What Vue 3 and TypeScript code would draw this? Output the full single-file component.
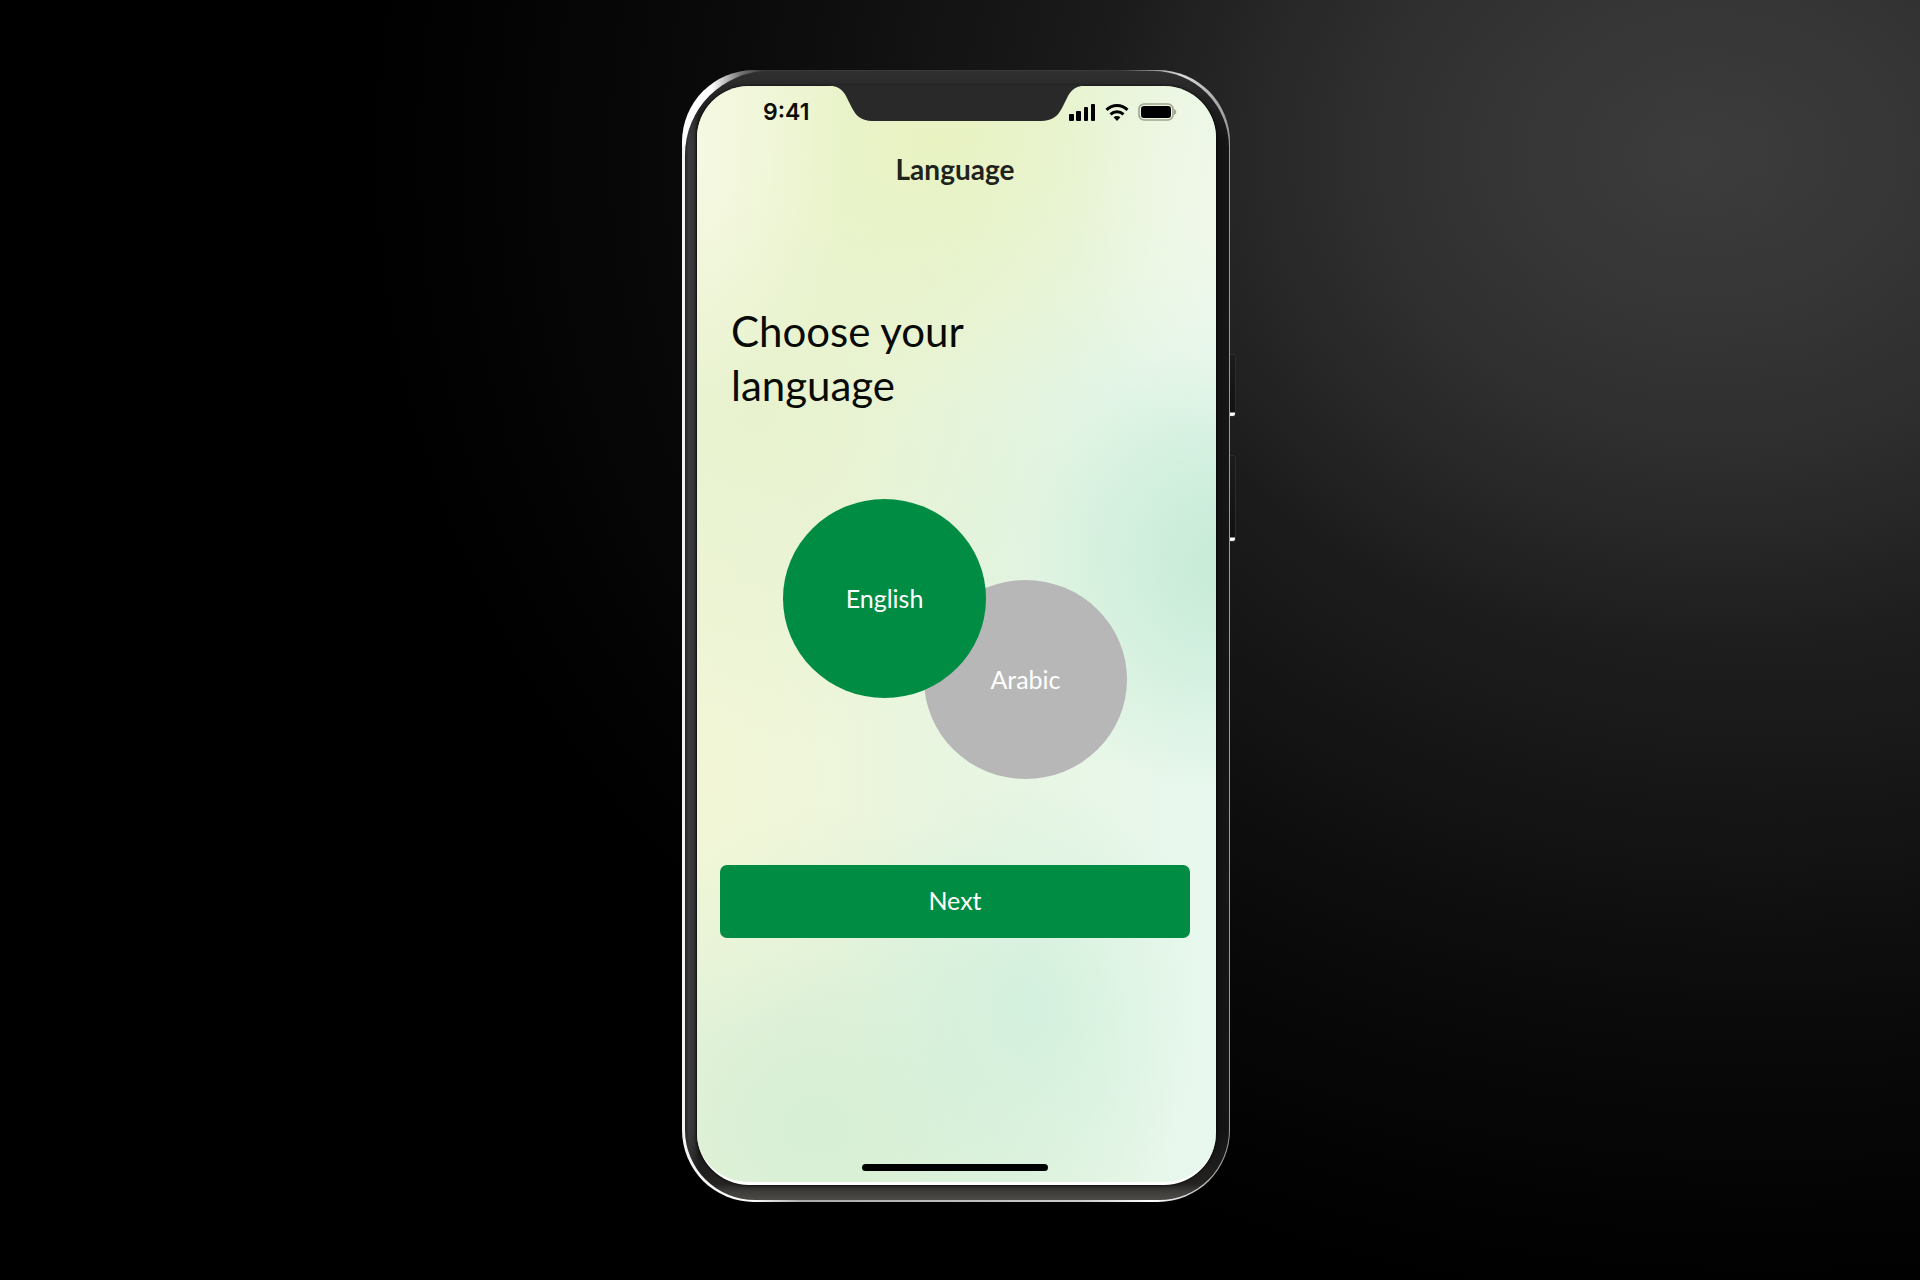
<script setup lang="ts">
import { ref } from 'vue'

interface Language {
  id: string
  label: string
}

const languages: Language[] = [
  { id: 'en', label: 'English' },
  { id: 'ar', label: 'Arabic' },
]
const selected = ref('en')
</script>

<template>
  <main class="stage">
    <div class="phone">
      <div class="side-keys">
        <span class="key key-up"></span>
        <span class="key key-down"></span>
      </div>
      <div class="bezel">
        <div class="screen">
          <svg class="notch" viewBox="0 0 262 36" aria-hidden="true">
            <path d="M0 0C12 1 16 4 20 11L26 23C30 31 36 36 46 36H215C226 36 232 31 236 23L242 11C246 4 250 1 262 0Z" fill="#292929" />
          </svg>
          <div class="status">
            <time class="clock">9:41</time>
            <div class="indicators">
              <svg width="28" height="18" viewBox="0 0 28 18" aria-hidden="true">
                <rect x="1" y="11" width="5" height="7" rx="1" />
                <rect x="8" y="8" width="5" height="10" rx="1" />
                <rect x="16" y="4" width="4" height="14" rx="1" />
                <rect x="23" y="1" width="4" height="17" rx="1" />
              </svg>
              <svg width="24" height="18" viewBox="0 0 24 18" aria-hidden="true">
                <g fill="none" stroke="#000" stroke-width="3">
                  <path d="M1.500 6.800C7.500 1 16.500 1 22.500 6.800" />
                  <path d="M5.500 11.300C9.300 7.800 14.700 7.800 18.500 11.300" />
                </g>
                <path d="M8.600 14.200C10.500 12.600 13.500 12.600 15.400 14.200L12 18Z" />
              </svg>
              <svg width="40" height="18" viewBox="0 0 40 18" aria-hidden="true">
                <rect x="1" y="1" width="34" height="16" rx="5" fill="none" stroke="#9da38d" stroke-width="1.600" />
                <rect x="3" y="3" width="30" height="12" rx="3" />
                <path d="M36 6C39 7 39 11 36 12Z" fill="#a3a994" />
              </svg>
            </div>
          </div>
          <header class="title">Language</header>
          <form class="chooser" @submit.prevent>
            <h1 class="heading">Choose your<br />language</h1>
            <div class="options" role="radiogroup" aria-label="Language">
              <label
                v-for="language in languages"
                :key="language.id"
                class="option"
                :class="{ active: selected === language.id }"
              >
                <input v-model="selected" type="radio" name="language" :value="language.id" />
                <span>{{ language.label }}</span>
              </label>
            </div>
            <button class="next" type="submit">Next</button>
          </form>
          <div class="home"></div>
        </div>
      </div>
    </div>
  </main>
</template>

<style>
body {
  margin: 0;
  background: #000;
}
</style>

<style scoped>
.stage {
  box-sizing: border-box;
  min-height: 100vh;
  padding: 70px 8px 72px 0;
  display: flex;
  justify-content: center;
  align-items: flex-start;
  font-family: Lato, 'Open Sans', sans-serif;
  background:
    radial-gradient(ellipse 32% 38% at 88% 12%, rgba(70, 70, 70, 0.6), rgba(60, 60, 60, 0)),
    radial-gradient(ellipse 74% 92% at 92% 12%, #2e2e2e 0%, #272727 25%, #191919 50%, #0b0b0b 72%, #030303 90%, #000 100%);
}

.phone {
  box-sizing: border-box;
  position: relative;
  width: 100%;
  max-width: 548px;
  padding: 1px 1px 2px 3px;
  border-radius: 72px;
  background:
    linear-gradient(90deg, #fff 0, #fff 30px, #777 58px, #3a3a3a 80px, #3a3a3a 440px, #ddd 500px, #999 548px) top / 100% 76px no-repeat,
    linear-gradient(90deg, #f4f4f4 0, #fff 70px, #aaa 120px, #ccc 400px, #fff 470px, #999 548px);
}

.side-keys {
  position: absolute;
  top: 284px;
  left: 100%;
  width: 6px;
  display: flex;
  flex-direction: column;
  gap: 38px;
}

.key {
  box-sizing: border-box;
  border: 1px solid #2c2c2c;
  border-left: 0;
  border-radius: 0 3px 3px 0;
  background: linear-gradient(0deg, #eee 0, #fff 3px, #111 4px, #1c1c1c 100%);
}

.key-up {
  height: 63px;
}

.key-down {
  height: 87px;
}

.bezel {
  padding: 15px 13px 15px 12px;
  border-radius: 84px 76px 70px 70px;
  background:
    linear-gradient(0deg, #4c4946 0, #403e3b 8px, #242322 16px, rgba(30, 30, 30, 0) 70px),
    linear-gradient(180deg, #303030 0, #292929 15px, rgba(30, 30, 30, 0) 70px),
    linear-gradient(90deg, #262628 0, #3c3c3e 4px, #343436 9px, #141414 14px, #0c0c0c 520px, #161616 100%);
}

.screen {
  position: relative;
  display: flex;
  flex-direction: column;
  padding-right: 3px;
  border-radius: 52px;
  border-bottom: 3px solid #fff;
  box-shadow: 0 0 3px #000;
  background:
    radial-gradient(ellipse 150px 240px at 0 70px, rgba(248, 250, 232, 0.8), rgba(248, 250, 232, 0)),
    radial-gradient(ellipse 150px 240px at 519px 110px, rgba(242, 248, 234, 0.8), rgba(242, 248, 234, 0)),
    radial-gradient(ellipse 190px 220px at 519px 485px, rgba(190, 232, 210, 0.7), rgba(190, 232, 210, 0)),
    radial-gradient(ellipse 360px 260px at 519px 440px, rgba(208, 239, 220, 0.55), rgba(208, 239, 220, 0)),
    radial-gradient(ellipse 360px 280px at 240px 50px, rgba(232, 242, 190, 0.9), rgba(232, 242, 190, 0)),
    radial-gradient(ellipse 340px 330px at 60px 330px, rgba(230, 241, 202, 0.8), rgba(230, 241, 202, 0)),
    radial-gradient(ellipse 220px 260px at 0 690px, rgba(242, 246, 212, 0.8), rgba(242, 246, 212, 0)),
    radial-gradient(ellipse 180px 230px at 330px 920px, rgba(208, 240, 222, 0.8), rgba(208, 240, 222, 0)),
    radial-gradient(ellipse 360px 320px at 120px 1040px, rgba(212, 238, 212, 0.95), rgba(212, 238, 212, 0)),
    linear-gradient(90deg, #f0f6dc 0, #e8f5e0 50%, #e8f8ee 100%);
}

.notch {
  position: absolute;
  top: -1px;
  left: 129px;
  width: 262px;
  height: 36px;
}

.status {
  display: flex;
  justify-content: space-between;
  align-items: center;
  height: 36px;
  padding: 8px 35px 0 66px;
}

.clock {
  font: 600 23px/24px Inter, sans-serif;
  color: #0b0d06;
}

.indicators {
  display: flex;
  gap: 9px;
}

.title {
  margin-top: 23px;
  font-size: 28px;
  line-height: 32px;
  font-weight: 700;
  text-align: center;
  color: #20231c;
}

.chooser {
  display: flex;
  flex-direction: column;
  padding: 119px 23px 0;
}

.heading {
  margin: 0;
  padding-left: 11px;
  font-size: 42px;
  line-height: 54px;
  font-weight: 400;
  color: #080a06;
}

.options {
  display: flex;
  justify-content: center;
  align-items: flex-start;
  margin-top: 87px;
}

.option {
  box-sizing: border-box;
  width: 203px;
  height: 199px;
  padding-bottom: 2px;
  display: flex;
  justify-content: center;
  align-items: center;
  border-radius: 50%;
  background: #b7b7b7;
  color: #fff;
  font-size: 25px;
  line-height: 32px;
  cursor: pointer;
}

.option + .option {
  margin: 81px 0 0 -62px;
}

.option.active {
  z-index: 1;
  background: #008c43;
}

.option input {
  appearance: none;
  position: absolute;
  margin: 0;
}

.next {
  height: 73px;
  margin-top: 86px;
  padding: 0 0 4px;
  border: 0;
  border-radius: 7px;
  background: #008c43;
  color: #fff;
  font: 400 25px/32px Lato, sans-serif;
}

.home {
  align-self: center;
  width: 186px;
  height: 7px;
  margin: 226px 0 11px;
  border-radius: 4px;
  background: #000;
}
</style>
